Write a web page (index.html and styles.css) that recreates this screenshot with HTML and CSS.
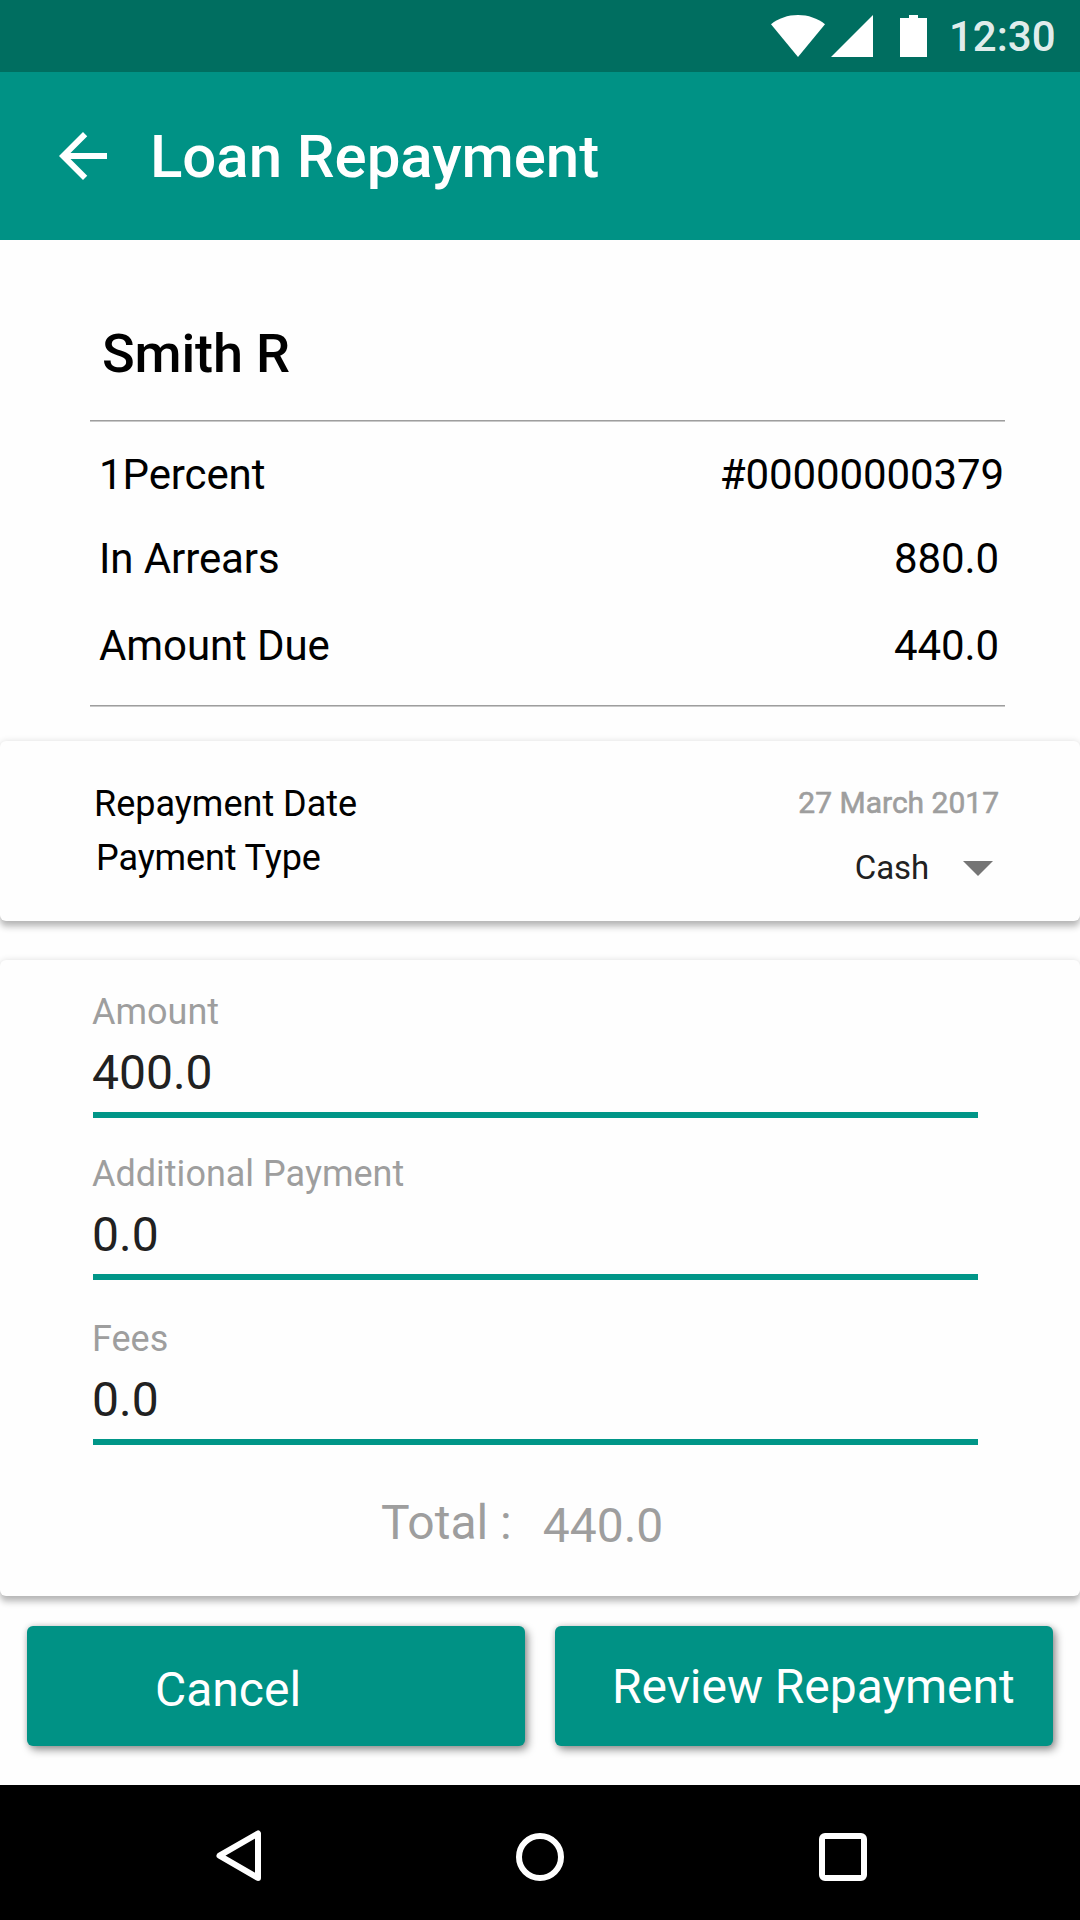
FILE: index.html
```html
<!DOCTYPE html>
<html lang="en">
<head>
<meta charset="utf-8">
<title>Loan Repayment</title>
<link rel="stylesheet" href="styles.css">
</head>
<body>
<div class="screen">
  <div class="status-bar">
    <svg class="status-icons" width="156" height="42" viewBox="0 0 156 42" fill="#fff">
      <path d="M27 42 0 9.200C7.500 3.300 16.800 0 27 0S46.500 3.300 54 9.200Z"/>
      <path d="M60 42H102V0Z"/>
      <path d="M129 3H138V0H147V3H156V42H129Z"/>
    </svg>
    <span class="clock">12:30</span>
  </div>
  <header class="app-bar">
    <svg class="back" width="72" height="72" viewBox="0 0 24 24" fill="#fff"><path d="M20 11H7.830l5.590-5.590L12 4l-8 8 8 8 1.410-1.410L7.830 13H20v-2z"/></svg>
    <h1 class="title">Loan Repayment</h1>
  </header>
  <main class="content">
    <section class="summary">
      <h2 class="client">Smith R</h2>
      <dl class="facts">
        <div class="fact fact-account"><dt>1Percent</dt><dd>#00000000379</dd></div>
        <div class="fact fact-arrears"><dt>In Arrears</dt><dd>880.0</dd></div>
        <div class="fact fact-due"><dt>Amount Due</dt><dd>440.0</dd></div>
      </dl>
    </section>
    <section class="card details">
      <div class="detail-labels">
        <span>Repayment Date</span>
        <span class="type-label">Payment Type</span>
      </div>
      <div class="detail-values">
        <span class="date">27 March 2017</span>
        <div class="select">
          <span>Cash</span>
          <svg width="30" height="15" viewBox="0 0 30 15" fill="#757575"><path d="M0 0H30L15 15Z"/></svg>
        </div>
      </div>
    </section>
    <section class="card amounts">
      <div class="field"><span class="label">Amount</span><span class="value">400.0</span></div>
      <div class="field"><span class="label">Additional Payment</span><span class="value">0.0</span></div>
      <div class="field field-fees"><span class="label">Fees</span><span class="value">0.0</span></div>
      <div class="total"><span>Total :</span><span class="total-value">440.0</span></div>
    </section>
    <div class="actions">
      <button class="button cancel" type="button">Cancel</button>
      <button class="button review" type="button">Review Repayment</button>
    </div>
  </main>
  <nav class="nav-bar">
    <svg width="46" height="52" viewBox="0 0 46 52" fill="none" stroke="#fff" stroke-width="6" stroke-linejoin="round"><path d="M42 3.500V48L3.500 25.700Z"/></svg>
    <svg class="home" width="48" height="48" viewBox="0 0 48 48" fill="none" stroke="#fff" stroke-width="6"><circle cx="24" cy="24" r="21"/></svg>
    <svg class="recent" width="48" height="48" viewBox="0 0 48 48" fill="#fff" fill-rule="evenodd"><path d="M6 0H42A6 6 0 0 1 48 6V42A6 6 0 0 1 42 48H6A6 6 0 0 1 0 42V6A6 6 0 0 1 6 0ZM6 6V42H42V6Z"/></svg>
  </nav>
</div>
</body>
</html>
```
FILE: styles.css
```css
* { box-sizing: border-box; }

body {
  margin: 0;
  background: #fefefe;
  color: #000;
  font-family: Roboto, sans-serif;
}

h1, h2, dl, dt, dd { margin: 0; font-weight: 400; }
svg { display: block; flex: none; }

.screen {
  display: flex;
  flex-direction: column;
  width: 1080px;
  height: 1920px;
  overflow: hidden;
}

.status-bar {
  display: flex;
  align-items: flex-start;
  height: 72px;
  padding: 15px 0 0 771px;
  background: #006e60;
}
.clock {
  margin-left: 22px;
  color: rgba(255, 255, 255, .9);
  font-size: 42px;
  font-weight: 500;
  line-height: 44px;
  white-space: nowrap;
}

.app-bar {
  display: flex;
  align-items: center;
  height: 168px;
  padding-left: 47px;
  background: #009285;
}
.title {
  margin-left: 31px;
  padding-top: 2px;
  color: #fff;
  font-size: 60px;
  font-weight: 500;
  letter-spacing: -.05px;
  line-height: 72px;
}

.content { flex: 1; }

.summary { width: 915px; margin-left: 90px; }
.client {
  padding: 82px 0 34px 12px;
  font-size: 54px;
  font-weight: 500;
  letter-spacing: -.15px;
  line-height: 64px;
}
.facts {
  padding: 30px 0 36px 9px;
  background:
    linear-gradient(#9e9e9e 50%, #c9c9c9 50%) top / 100% 2px no-repeat,
    linear-gradient(#9e9e9e 50%, #c9c9c9 50%) bottom / 100% 2px no-repeat;
}
.fact {
  display: flex;
  justify-content: space-between;
  font-size: 42px;
  letter-spacing: -.1px;
  line-height: 50px;
}
.fact-account { padding-right: 1px; }
.fact-arrears, .fact-due { padding-right: 6px; }
.fact-arrears { margin-top: 34px; }
.fact-due { margin-top: 37px; }

.card {
  border-radius: 6px;
  background: #fefefe;
  box-shadow: 0 6px 6px rgba(0, 0, 0, .24), 0 0 6px rgba(0, 0, 0, .12);
}

.details {
  display: flex;
  justify-content: space-between;
  height: 180px;
  margin-top: 34px;
  padding: 36px 81px 0 94px;
}
.detail-labels {
  display: flex;
  flex-direction: column;
  font-size: 36px;
  line-height: 54px;
}
.type-label { padding-left: 2px; letter-spacing: -.1px; }
.detail-values {
  display: flex;
  flex-direction: column;
  align-items: flex-end;
}
.date {
  color: #9e9e9e;
  font-size: 30px;
  -webkit-text-stroke: .6px #9e9e9e;
  line-height: 52px;
}
.select {
  display: flex;
  align-items: center;
  gap: 34px;
  margin: 13px 6px 0 0;
  color: #212121;
  font-size: 33px;
  letter-spacing: -.1px;
  line-height: 52px;
}

.amounts {
  height: 636px;
  margin-top: 39px;
  padding: 30px 102px 0 93px;
}
.field {
  display: flex;
  flex-direction: column;
  gap: 11px;
  margin-bottom: 34px;
  padding-bottom: 11px;
  border-bottom: 6px solid #009688;
}
.field-fees { margin: 37px 0 50px; }
.label, .value { margin-left: -1px; }
.label { color: #9e9e9e; font-size: 36px; line-height: 44px; }
.value { color: #212121; font-size: 48px; line-height: 56px; }
.total {
  display: flex;
  gap: 31px;
  padding-left: 288px;
  color: #9e9e9e;
  font-size: 48px;
  line-height: 56px;
}
.total-value { padding-top: 3px; }

.actions {
  display: grid;
  grid-template-columns: 1fr 1fr;
  gap: 30px;
  padding: 30px 27px 0;
}
.button {
  height: 120px;
  padding: 0;
  border: 0;
  border-radius: 6px;
  background: #009285;
  box-shadow: 3px 4px 9px rgba(0, 0, 0, .4), 0 0 6px rgba(0, 0, 0, .16);
  color: #fff;
  font: 400 48px/56px Roboto, sans-serif;
  text-align: left;
}
.cancel { padding: 8px 0 0 128px; }
.review { padding: 2px 0 0 57px; letter-spacing: -.04px; }

.nav-bar {
  display: flex;
  height: 135px;
  padding: 45px 0 0 216px;
  background: #000;
}
.home { margin: 3px 0 0 254px; }
.recent { margin: 3px 0 0 255px; }
```
